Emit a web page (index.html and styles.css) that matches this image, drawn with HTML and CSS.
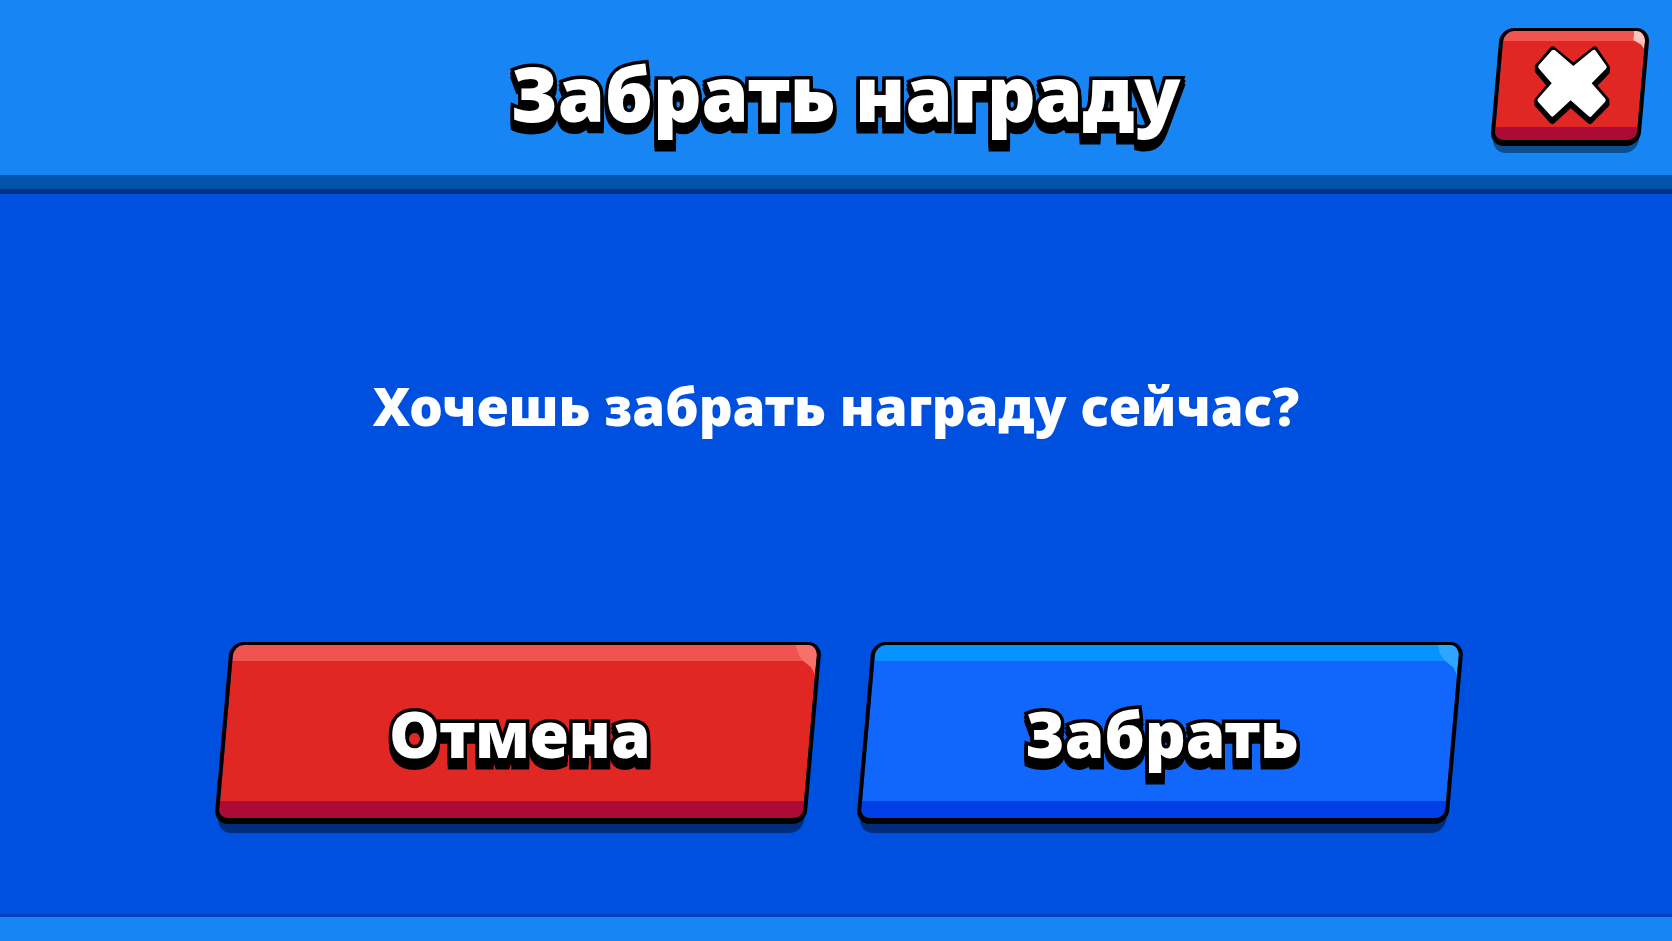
FILE: index.html
```html
<!DOCTYPE html>
<html lang="ru">
<head>
  <meta charset="UTF-8">
  <title>Забрать награду</title>
  <meta name="viewport" content="width=device-width, initial-scale=1.0">
  <link rel="stylesheet" href="styles.css">
</head>
<body>
  <div class="dialog" role="dialog" aria-labelledby="dialog-title">
    <!-- Header -->
    <header class="dialog-header">
      <h1 class="dialog-title outlined" id="dialog-title">Забрать награду</h1>
      <button type="button" class="btn btn-close btn-red" aria-label="Закрыть">
        <span class="btn-face"></span>
        <svg class="close-icon" viewBox="195 105 231 237" aria-hidden="true">
          <g fill="#000" stroke="#000" stroke-width="18" stroke-linejoin="round">
            <path d="M251 115L313 165L377 115L414 170L368 217L412 268L363 318L305 268L250 318L205 268L248 217L206 167Z"/>
            <path d="M251 121L313 171L377 121L414 176L368 223L412 274L363 324L305 274L250 324L205 274L248 223L206 173Z"/>
            <path d="M251 127L313 177L377 127L414 182L368 229L412 280L363 330L305 280L250 330L205 280L248 229L206 179Z"/>
          </g>
          <path fill="#fff" d="M249 118Q253 114 258 118L313 165L371 118Q376 114 380 119L412 164Q415 169 411 173L368 217L409 263Q412 268 408 273L368 315Q364 320 359 316L305 268L254 315Q250 319 246 315L207 272Q204 268 207 263L248 217L209 172Q206 167 209 163Z"/>
        </svg>
      </button>
    </header>

    <main class="dialog-body">
      <p class="dialog-text">Хочешь забрать награду сейчас?</p>
      <div class="dialog-actions">
        <button type="button" class="btn btn-action btn-red">
          <span class="btn-face"></span>
          <span class="btn-label outlined">Отмена</span>
        </button>
        <button type="button" class="btn btn-action btn-blue">
          <span class="btn-face"></span>
          <span class="btn-label outlined">Забрать</span>
        </button>
      </div>
    </main>
    <div class="dialog-footer"></div>
  </div>
</body>
</html>
```
FILE: styles.css
```css
* {
  box-sizing: border-box;
}
body {
  margin: 0;
  background: #0050e0;
  font-family: 'Noto Sans', 'Open Sans', sans-serif;
  font-weight: 900;
  color: #fff;
}
.dialog {
  min-height: 100vh;
  display: flex;
  flex-direction: column;
}
/* Header */
.dialog-header {
  display: grid;
  grid-template-columns: 1fr auto 1fr;
  align-items: start;
  padding: 28px 27px 36px 47px;
  background: #1785f4;
  border-bottom: 5px solid #003088;
  box-shadow: inset 0 -14px #0054a9;
}
.dialog-title {
  grid-column: 2;
  margin: 0;
  padding-top: 5px;
  font-size: 76px;
  line-height: 120px;
  font-weight: inherit;
  white-space: nowrap;
}
.outlined {
  -webkit-text-stroke: 7px #000;
  paint-order: stroke fill;
  filter: drop-shadow(0 4px 0 #000) drop-shadow(0 4px 0 #000);
}
/* Body */
.dialog-body {
  flex: 1;
  display: flex;
  flex-direction: column;
  justify-content: space-between;
  align-items: center;
  gap: 40px;
  padding: 168px 24px 90px;
}
.dialog-text {
  margin: 0;
  font-size: 53px;
  line-height: 88px;
  text-align: center;
}
.dialog-actions {
  width: 100%;
  max-width: 1240px;
  padding-left: 6px;
  display: grid;
  grid-template-columns: 1fr 1fr;
  gap: 50px;
}
/* Buttons */
.btn {
  position: relative;
  display: flex;
  align-items: center;
  justify-content: center;
  padding: 0;
  border: none;
  background: none;
  color: #fff;
  font: inherit;
  cursor: pointer;
}
.btn-face {
  --shine-h: 16px;
  --base-h: 17px;
  position: absolute;
  inset: 0;
  transform: skewX(-5deg);
  border: 4px solid #000;
  border-width: 3px 4px 6px;
  border-radius: 14px;
  background:
    linear-gradient(var(--top), var(--top)) top / 100% var(--shine-h) no-repeat padding-box,
    linear-gradient(var(--base), var(--base)) bottom / 100% var(--base-h) no-repeat padding-box,
    var(--fill) padding-box;
  overflow: hidden;
}
.btn::before {
  content: '';
  position: absolute;
  inset: 9px 3px -9px;
  transform: skewX(-5deg);
  border-radius: 14px;
  background: var(--shadow);
}
.btn-face::after {
  content: '';
  position: absolute;
  top: 0;
  right: 0;
  width: 22px;
  height: 30px;
  background: var(--glint);
  clip-path: polygon(0 0, 100% 0, 100% 100%, 80% 75%, 35% 50%, 15% 30%);
}
.btn:active {
  filter: brightness(0.9);
}
.btn-red {
  --fill: #e02724;
  --top: #f15350;
  --base: #ae0a37;
  --glint: #f7716a;
  --shadow: #002c7c;
}
.btn-blue {
  --fill: #1167fc;
  --top: #0792ff;
  --base: #003fe8;
  --glint: #2ea5ff;
  --shadow: #002c7c;
}
.btn-action {
  height: 182px;
  padding: 2px 0 0 4px;
}
.btn-label {
  position: relative;
  font-size: 64px;
  line-height: 96px;
}
.btn-close {
  --shadow: #0b4f92;
  --glint: #ffc4bd;
  grid-column: 3;
  justify-self: end;
  width: 150px;
  height: 118px;
  padding-left: 4px;
}
.btn-close::before {
  inset: 7px 2px -7px;
}
.btn-close .btn-face {
  --shine-h: 10px;
  --base-h: 13px;
}
.btn-close .btn-face::after {
  width: 12px;
  height: 18px;
  clip-path: polygon(0 0, 100% 0, 100% 100%, 70% 75%, 0 50%);
}
.close-icon {
  position: relative;
  width: 77px;
  height: 79px;
  margin-bottom: 4px;
  overflow: visible;
}
.dialog-footer {
  height: 27px;
  background: #1785f4;
  border-top: 3px solid #0041bb;
}
```
